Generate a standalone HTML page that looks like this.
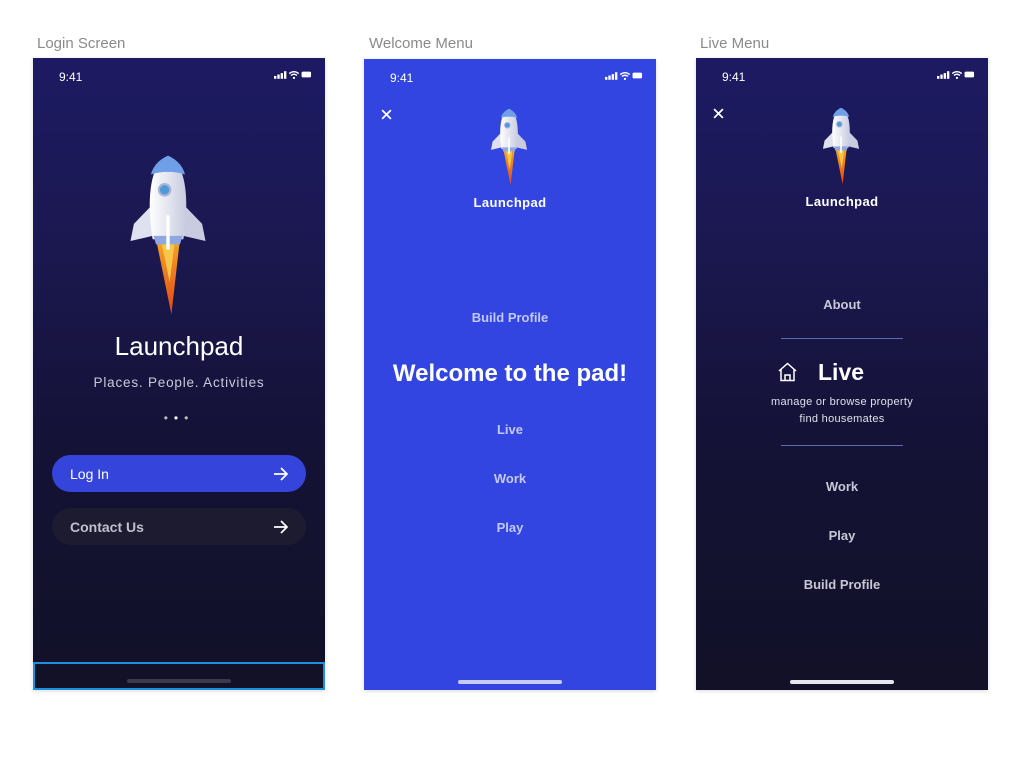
<!DOCTYPE html>
<html><head><meta charset="utf-8"><style>
*{margin:0;padding:0;box-sizing:border-box}
body{width:1024px;height:757px;background:#fff;position:relative;overflow:hidden;font-family:"Liberation Sans",Helvetica,Arial,sans-serif}
.lbl{position:absolute;top:35px;font-size:15px;color:#8a8a8a}
.scr{position:absolute;top:58px;width:292px;height:632px;overflow:hidden;box-shadow:0 1px 4px rgba(0,0,0,.15)}
.dark{background:linear-gradient(180deg,#1d1a63 0%,#1b1850 30%,#141236 60%,#121127 100%)}
.t{position:absolute;left:0;width:100%;text-align:center;color:#fff}
.time{position:absolute;top:12px;left:26px;font-size:12px;color:#fff}
.sb{position:absolute;top:12px;right:13px}
.home{position:absolute;bottom:6px;left:94px;width:104px;height:4px;border-radius:2px}
.btn{position:absolute;left:19px;width:254px;height:37px;border-radius:19px;color:#fff;font-size:14px;padding:11px 0 0 18px}
.arr{position:absolute;right:17px;top:11px}
.x{position:absolute;left:17px;top:50px}
.hr{position:absolute;left:85px;width:122px;height:1px;background:#5a6bb0}
</style></head><body>
<svg width="0" height="0" style="position:absolute"><defs>
<linearGradient id="fl" x1="0" y1="0" x2="0" y2="1"><stop offset="0" stop-color="#f5a623"/><stop offset="1" stop-color="#e2461a"/></linearGradient>
<linearGradient id="bd" x1="0" y1="0" x2="1" y2="0"><stop offset="0" stop-color="#fff"/><stop offset="1" stop-color="#c8cbe0"/></linearGradient>
<symbol id="rk" viewBox="0 0 100 190">
<path d="M36,100 L64,100 L54,188 Z" fill="url(#fl)"/>
<path d="M42,102 L58,102 L52,150 Z" fill="#f7c64a"/>
<path d="M33,58 L10,82 L6,102 L32,96 Z" fill="#dfe1ee"/>
<path d="M67,58 L90,82 L94,102 L68,96 Z" fill="#c9cce0"/>
<path d="M50,2 C70,10 76,50 68,100 L32,100 C24,50 30,10 50,2Z" fill="url(#bd)"/>
<path d="M50,2 C62,7 68,16 70,24 C58,20 42,20 30,24 C32,16 38,7 50,2Z" fill="#6f9fe6"/>
<path d="M33,96 L67,96 L64,106 L36,106Z" fill="#8fa8e0"/>
<circle cx="46" cy="42" r="8" fill="#aab4d8"/><circle cx="46" cy="42" r="5.5" fill="#4e9ad8"/>
<path d="M48,72 L52,72 L52,112 L48,112Z" fill="#fff"/>
</symbol>
<symbol id="st" viewBox="0 0 40 10">
<rect x="0" y="6" width="2.5" height="3" fill="#fff"/><rect x="3.5" y="4.5" width="2.5" height="4.5" fill="#fff"/><rect x="7" y="3" width="2.5" height="6" fill="#fff"/><rect x="10.5" y="1" width="2.5" height="8" fill="#fff"/>
<path d="M16,3.5 Q21,-0.5 26,3.5 M17.8,5.5 Q21,3 24.2,5.5" stroke="#fff" stroke-width="1.5" fill="none"/><circle cx="21" cy="8" r="1.2" fill="#fff"/>
<rect x="29" y="1.5" width="10" height="6" rx="1.5" fill="#fff"/>
</symbol>
<symbol id="ar" viewBox="0 0 16 16"><path d="M1,8 H14 M8,2 L14,8 L8,14" stroke="#fff" stroke-width="1.7" fill="none"/></symbol>
<symbol id="xx" viewBox="0 0 10 10"><path d="M1,1 L9,9 M9,1 L1,9" stroke="#fff" stroke-width="1.6"/></symbol>
</defs></svg>

<div class="lbl" style="left:37px">Login Screen</div>
<div class="lbl" style="left:369px">Welcome Menu</div>
<div class="lbl" style="left:700px">Live Menu</div>

<div class="scr dark" style="left:33px">
<div class="time">9:41</div><svg class="sb" width="38" height="10"><use href="#st"/></svg>
<svg style="position:absolute;left:92px;top:96px" width="86" height="162"><use href="#rk"/></svg>
<div class="t" style="top:273px;font-size:26px">Launchpad</div>
<div class="t" style="top:317px;font-size:13.5px;color:#c9c9d8;letter-spacing:.8px">Places. People. Activities</div>
<div class="t" style="top:353px;font-size:12px;color:#bbb;letter-spacing:6px">•<span style="color:#fff">•</span>•</div>
<div class="btn" style="top:397px;background:#3545dc">Log In<svg class="arr" width="16" height="16"><use href="#ar"/></svg></div>
<div class="btn" style="top:450px;background:#1c1b30;color:#c0c0cc;font-weight:bold">Contact Us<svg class="arr" width="16" height="16"><use href="#ar"/></svg></div>
<div style="position:absolute;left:0;top:604px;width:292px;height:28px;border:2px solid #1d8fe0"></div>
<div class="home" style="background:#3a3a4a;bottom:7px"></div>
</div>

<div class="scr" style="left:364px;top:59px;height:631px;background:#3345e0">
<div class="time">9:41</div><svg class="sb" width="38" height="10"><use href="#st"/></svg>
<svg class="x" width="11" height="11"><use href="#xx"/></svg>
<svg style="position:absolute;left:124px;top:49px" width="42" height="78"><use href="#rk"/></svg>
<div class="t" style="top:136px;font-size:13px;font-weight:bold;letter-spacing:.4px">Launchpad</div>
<div class="t" style="top:251px;font-size:13px;font-weight:bold;color:#c3c9f4">Build Profile</div>
<div class="t" style="top:301px;font-size:24px;font-weight:bold">Welcome to the pad!</div>
<div class="t" style="top:363px;font-size:13px;font-weight:bold;color:#c3c9f4">Live</div>
<div class="t" style="top:412px;font-size:13px;font-weight:bold;color:#c3c9f4">Work</div>
<div class="t" style="top:461px;font-size:13px;font-weight:bold;color:#c3c9f4">Play</div>
<div class="home" style="background:#c6cbf5"></div>
</div>

<div class="scr dark" style="left:696px">
<div class="time">9:41</div><svg class="sb" width="38" height="10"><use href="#st"/></svg>
<svg class="x" width="11" height="11"><use href="#xx"/></svg>
<svg style="position:absolute;left:124px;top:49px" width="42" height="78"><use href="#rk"/></svg>
<div class="t" style="top:136px;font-size:13px;font-weight:bold;letter-spacing:.4px">Launchpad</div>
<div class="t" style="top:239px;font-size:13px;font-weight:bold;color:#c8c8d4">About</div>
<div class="hr" style="top:280px"></div>
<svg style="position:absolute;left:81px;top:304px" width="21" height="20" viewBox="0 0 21 20"><path d="M2,9 L10.5,1.5 L19,9 M4,7.5 V18.5 H17 V7.5 M8,18.5 V13 H13 V18.5" stroke="#fff" stroke-width="1.5" fill="none"/></svg>
<div style="position:absolute;left:122px;top:301px;font-size:23px;font-weight:bold;color:#fff">Live</div>
<div class="t" style="top:338px;font-size:11px;color:#e0e0ea;letter-spacing:.3px">manage or browse property</div>
<div class="t" style="top:355px;font-size:11px;color:#e0e0ea;letter-spacing:.3px">find housemates</div>
<div class="hr" style="top:387px"></div>
<div class="t" style="top:421px;font-size:13px;font-weight:bold;color:#c8c8d4">Work</div>
<div class="t" style="top:470px;font-size:13px;font-weight:bold;color:#c8c8d4">Play</div>
<div class="t" style="top:519px;font-size:13px;font-weight:bold;color:#c8c8d4">Build Profile</div>
<div class="home" style="background:#e6e6ee"></div>
</div>
</body></html>
